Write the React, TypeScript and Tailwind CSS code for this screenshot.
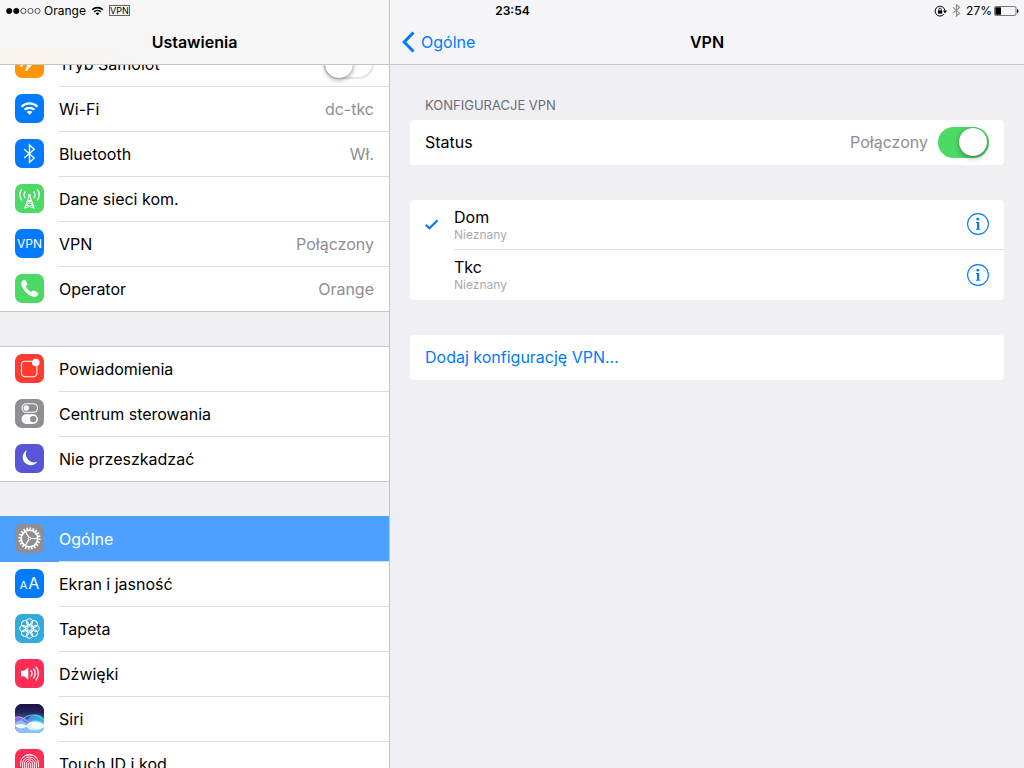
import React, { useState } from 'react';

interface SettingsItem {
  label: string;
  value?: string;
  icon: React.ReactNode;
}

interface VpnConfig {
  name: string;
  detail: string;
}

// Rounded tile behind every settings glyph
function Tile({ className, children }: { className: string; children: React.ReactNode }) {
  return (
    <svg
      viewBox="0 0 29 29"
      className={`mb-0.5 size-[29px] shrink-0 rounded-[7px] text-white ${className}`}
      fill="none"
      stroke="currentColor"
      aria-hidden="true"
    >
      {children}
    </svg>
  );
}

function TileText({ className, children }: { className: string; children: React.ReactNode }) {
  return (
    <span
      aria-hidden="true"
      className={`mb-0.5 flex size-[29px] shrink-0 items-baseline justify-center rounded-[7px] bg-[#007aff] leading-[29px] text-white ${className}`}
    >
      {children}
    </span>
  );
}

const airplaneIcon = (
  <Tile className="bg-[#ff9500]">
    <path
      d="M24.500 14c0 .9-1.500 1.500-3 1.500h-4L11.800 22h-1.900l2.600-6.500H8.800L6.700 18H5.200l1.200-4-1.200-4h1.500l2.100 2.500h3.700L9.900 6h1.900l5.700 6.500h4c1.500 0 3 .6 3 1.500z"
      fill="currentColor"
      stroke="none"
    />
  </Tile>
);

const wifiIcon = (
  <Tile className="bg-[#007aff]">
    <path d="M6.500 12.700a11.400 11.400 0 0 1 16 0" strokeWidth="2.200" />
    <path d="M9.500 15.800a7.200 7.200 0 0 1 10 0" strokeWidth="2.200" />
    <path d="M11.700 18a4 4 0 0 1 5.600 0l-2.800 2.900z" fill="currentColor" stroke="none" />
  </Tile>
);

const bluetoothIcon = (
  <Tile className="bg-[#007aff]">
    <path d="M9.200 10.200l10 8.900-4.700 4.300V5.900l4.700 4.300-10 8.900" strokeWidth="1.400" />
  </Tile>
);

const cellularIcon = (
  <Tile className="bg-[#4cd964]">
    <path d="M14.500 11l-4.800 13.500M14.500 11l4.800 13.500M12.900 16.500h3.200M12.600 16.500l5.200 4.500-7.600 3M16.400 16.500l-5.200 4.500 7.600 3" strokeWidth="1.100" />
    <circle cx="14.500" cy="11" r="1.300" fill="currentColor" stroke="none" />
    <path d="M10.400 7.500a4.600 4.600 0 0 0 0 6.500M18.600 7.500a4.600 4.600 0 0 1 0 6.500M6.900 5.200a8.200 8.200 0 0 0 0 11M22.100 5.200a8.200 8.200 0 0 1 0 11" strokeWidth="1.400" />
  </Tile>
);

const phoneIcon = (
  <Tile className="bg-[#4cd964]">
    <path
      d="M8.200 6.200c.9-.7 1.900-.6 2.500.3l1.500 2.500c.5.900.3 1.600-.4 2.200-.9.700-1 1.200-.5 2.100.9 1.700 2.200 3.100 3.900 4.100.9.500 1.400.5 2.100-.3.700-.8 1.400-.9 2.200-.4l3 1.900c.9.600 1 1.500.4 2.400-1.200 1.800-3.200 2.400-5.400 1.500C12.300 20.700 8.300 16.500 6.500 11.500c-.7-2-.2-4 1.700-5.300z"
      fill="currentColor"
      stroke="none"
    />
  </Tile>
);

const notificationsIcon = (
  <Tile className="bg-[#ff3b30]">
    <path d="M17.500 7.300H10A3.500 3.500 0 0 0 6.500 10.800v8.400A3.500 3.500 0 0 0 10 22.700h8.400a3.500 3.500 0 0 0 3.500-3.500v-7" strokeWidth="1.100" />
    <circle cx="20.800" cy="8.500" r="3.800" fill="currentColor" stroke="none" />
  </Tile>
);

const controlCenterIcon = (
  <Tile className="bg-[#8e8e93]">
    <rect x="7" y="4.700" width="15.500" height="8.600" rx="4.300" strokeWidth="1.100" />
    <circle cx="11.300" cy="9" r="2.700" fill="currentColor" stroke="none" />
    <rect x="6.500" y="15.300" width="16.500" height="9.600" rx="4.800" fill="currentColor" stroke="none" />
    <circle cx="18.200" cy="20.100" r="3.200" fill="#8e8e93" stroke="none" />
  </Tile>
);

const moonIcon = (
  <Tile className="bg-[#5856d6]">
    <path
      d="M11.800 6.300a8 8 0 1 0 10.700 11.200 8.200 8.200 0 0 1-10.700-11.200z"
      fill="currentColor"
      stroke="none"
    />
  </Tile>
);

const gearIcon = (
  <Tile className="bg-[#8e8e93]">
    <circle cx="14.500" cy="14.500" r="10" strokeWidth="2.200" pathLength="40" strokeDasharray="1 1" />
    <circle cx="14.500" cy="14.500" r="8.300" strokeWidth="1.700" />
    <circle cx="14.500" cy="14.500" r="1.300" strokeWidth="1" />
    <path d="M16 14.500h6.500M13.700 13.200l-3.500-6M13.700 15.800l-3.500 6" strokeWidth="1.200" />
  </Tile>
);

const wallpaperIcon = (
  <Tile className="bg-[#34aadc]">
    {[0, 45, 90, 135, 180, 225, 270, 315].map((angle) => (
      <circle
        key={angle}
        cx="14.500"
        cy="7.900"
        r="3.200"
        strokeWidth="1"
        transform={`rotate(${angle} 14.500 14.500)`}
      />
    ))}
    {[22, 67, 112, 157, 202, 247, 292, 337].map((angle) => (
      <circle
        key={angle}
        cx="14.500"
        cy="11.200"
        r="1.400"
        strokeWidth="0.800"
        transform={`rotate(${angle} 14.500 14.500)`}
      />
    ))}
  </Tile>
);

const soundsIcon = (
  <Tile className="bg-[#ff2d55]">
    <path d="M6 11.800h3l4.300-3.300v12l-4.300-3.300H6z" fill="currentColor" stroke="none" />
    <path d="M15.700 11.500a4.500 4.500 0 0 1 0 6M18.300 9.500a7.500 7.500 0 0 1 0 10M20.800 7.700a10.500 10.500 0 0 1 0 13.600" strokeWidth="1.300" />
  </Tile>
);

const siriIcon = (
  <Tile className="bg-[#1c1640]">
    <defs>
      <linearGradient id="siriSky" x1="0" y1="0" x2="0" y2="1">
        <stop offset="0" stopColor="#1d1345" />
        <stop offset="0.300" stopColor="#25265c" />
        <stop offset="0.550" stopColor="#3c6aa8" />
        <stop offset="1" stopColor="#a8dcff" />
      </linearGradient>
      <linearGradient id="siriWave" x1="0" y1="0" x2="1" y2="0">
        <stop offset="0" stopColor="#c85fe6" />
        <stop offset="0.450" stopColor="#5a8cf0" />
        <stop offset="1" stopColor="#27cfe0" />
      </linearGradient>
    </defs>
    <rect width="29" height="29" fill="url(#siriSky)" stroke="none" />
    <path d="M0 13.500c5-2 9 0 12 2.500C17 9 25 9 29 15v14H0z" fill="url(#siriWave)" fillOpacity="0.800" stroke="none" />
    <path d="M0 19c4-4 8-3 12 1 5-5 12-5 17 0v9H0z" fill="#8fd0ff" fillOpacity="0.750" stroke="none" />
    <path d="M0 13.500c6-2 10 2 14 5 5 3.500 10 3 15 0" stroke="#e09cf8" strokeWidth="0.900" />
    <path d="M3 20C10 10 21 8 29 16" stroke="#4be8ea" strokeWidth="0.900" />
    <path d="M0 21.500c4-2 8-1.800 11 .200 4-5 12-5.500 18-1v2.500c-6 4-14 4-18-.500-4 2.500-8 2-11-1.200z" fill="#f4fcff" stroke="none" />
    <path d="M2 26.500c7 1 11-4 15-7M12 21c4 3 8 6 14 5.500" stroke="#9cc8ff" strokeWidth="0.600" />
  </Tile>
);

const touchIdIcon = (
  <Tile className="bg-[#ff2d55]">
    <g strokeWidth="0.900" strokeLinecap="round">
      <path d="M7.500 8.500a10 10 0 0 1 14 0" />
      <path d="M5.500 17v-2.500a9 9 0 0 1 18 0V18" />
      <path d="M7.500 20v-5a7 7 0 0 1 14 0v6" />
      <path d="M9.400 22.500V15a5.100 5.100 0 0 1 10.200 0v8" />
      <path d="M11.300 24v-9a3.200 3.200 0 0 1 6.400 0v9" />
      <path d="M13.300 24v-9a1.200 1.200 0 0 1 2.400 0v9" />
    </g>
  </Tile>
);

const sections: SettingsItem[][] = [
  [
    { label: 'Wi-Fi', value: 'dc-tkc', icon: wifiIcon },
    { label: 'Bluetooth', value: 'Wł.', icon: bluetoothIcon },
    { label: 'Dane sieci kom.', icon: cellularIcon },
    { label: 'VPN', value: 'Połączony', icon: <TileText className="text-xs leading-[29px]">VPN</TileText> },
    { label: 'Operator', value: 'Orange', icon: phoneIcon },
  ],
  [
    { label: 'Powiadomienia', icon: notificationsIcon },
    { label: 'Centrum sterowania', icon: controlCenterIcon },
    { label: 'Nie przeszkadzać', icon: moonIcon },
  ],
  [
    { label: 'Ogólne', icon: gearIcon },
    {
      label: 'Ekran i jasność',
      icon: (
        <TileText className="gap-px text-base leading-[29px]">
          <span className="text-[11px]">A</span>A
        </TileText>
      ),
    },
    { label: 'Tapeta', icon: wallpaperIcon },
    { label: 'Dźwięki', icon: soundsIcon },
    { label: 'Siri', icon: siriIcon },
    { label: 'Touch ID i kod', icon: touchIdIcon },
  ],
];

const configs: VpnConfig[] = [
  { name: 'Dom', detail: 'Nieznany' },
  { name: 'Tkc', detail: 'Nieznany' },
];

function Switch({ id, checked, onChange }: { id: string; checked: boolean; onChange: (value: boolean) => void }) {
  return (
    <input
      id={id}
      type="checkbox"
      role="switch"
      checked={checked}
      onChange={(e) => onChange(e.target.checked)}
      className="flex h-[31px] w-[51px] shrink-0 cursor-pointer appearance-none items-center rounded-full border-2 border-[#e5e5e5] bg-white before:size-7 before:rounded-full before:bg-white before:shadow-[0_2px_5px_rgba(0,0,0,0.35),0_0_1px_rgba(0,0,0,0.4)] checked:justify-end checked:border-[#4cd964] checked:bg-[#4cd964]"
    />
  );
}

function StatusBar() {
  return (
    <div className="absolute inset-x-0 top-0 z-20 grid h-[21px] grid-cols-[1fr_auto_1fr] items-center pr-[5px] pl-1.5 text-xs text-black">
      <div className="flex items-center">
        <svg viewBox="0 0 35 8" className="mr-[3px] h-2 w-[35px]" stroke="#111" strokeWidth="0.700" aria-hidden="true">
          <circle cx="3.200" cy="4" r="2.700" fill="#000" />
          <circle cx="10.300" cy="4" r="2.700" fill="#000" />
          <circle cx="17.400" cy="4" r="2.600" fill="none" />
          <circle cx="24.500" cy="4" r="2.600" fill="none" />
          <circle cx="31.500" cy="4" r="2.600" fill="none" />
        </svg>
        <span>Orange</span>
        <svg viewBox="5 7 19 15" className="ml-[5px] h-[10px] w-[13px]" fill="none" stroke="#000" aria-hidden="true">
          <path d="M6.500 12.700a11.400 11.400 0 0 1 16 0M9.500 15.800a7.200 7.200 0 0 1 10 0" strokeWidth="2.300" />
          <path d="M11.700 18a4 4 0 0 1 5.600 0l-2.800 2.900z" fill="#000" stroke="none" />
        </svg>
        <span className="ml-[5px] flex h-[11px] w-[21px] items-center justify-center border border-[#666] text-[9px]">VPN</span>
      </div>
      <span className="font-semibold">23:54</span>
      <div className="flex items-center justify-end">
        <svg viewBox="0 0 13 12" className="mr-[5px] h-3 w-[13px]" fill="none" stroke="#000" aria-hidden="true">
          <path d="M9.900 9.200a4.900 4.900 0 1 1 1-3.700" />
          <path d="M9 5.500h4L11 8.500z" fill="#000" stroke="none" />
          <rect x="4" y="5.400" width="4.200" height="3.200" fill="#000" stroke="none" />
          <path d="M4.900 5.600V4.400a1.200 1.200 0 0 1 2.400 0v1.200" strokeWidth="0.800" />
        </svg>
        <svg viewBox="8 5 13 20" className="mr-[5px] h-[13px] w-[9px]" fill="none" stroke="#909090" aria-hidden="true">
          <path d="M9.200 10.200l10 8.900-4.700 4.300V5.900l4.700 4.300-10 8.900" strokeWidth="1.800" />
        </svg>
        <span>27%</span>
        <svg viewBox="0 0 25 10" className="ml-0.5 h-[10px] w-[25px]" fill="none" aria-hidden="true">
          <rect x="0.500" y="0.500" width="21.500" height="9" rx="1.500" stroke="#444" strokeWidth="0.700" />
          <rect x="1.300" y="1.300" width="5.700" height="7.400" rx="0.500" fill="#000" />
          <path d="M23 3c1 .2 1.500 1 1.500 2S24 6.800 23 7z" fill="#000" />
        </svg>
      </div>
    </div>
  );
}

function SettingsRow({ item, selected, last, onSelect }: {
  item: SettingsItem;
  selected: boolean;
  last: boolean;
  onSelect: () => void;
}) {
  return (
    <li className={last ? 'border-b border-[#c8c7cc]' : ''}>
      <button
        type="button"
        onClick={onSelect}
        className={`flex w-full items-center gap-[15px] pl-[15px] text-left ${selected ? 'bg-[#4ca1ff] text-white' : 'bg-white text-black'}`}
      >
        {item.icon}
        <span className={`flex flex-1 items-center justify-between pr-[15px] pb-px ${last ? 'h-11' : 'h-[45px] border-b border-[#dddde0]'}`}>
          <span>{item.label}</span>
          {item.value && <span className="text-[#8e8e93]">{item.value}</span>}
        </span>
      </button>
    </li>
  );
}

function Sidebar() {
  const [airplane, setAirplane] = useState(false);
  const [current, setCurrent] = useState('Ogólne');

  // the line above a section takes the highlight when its first row is selected
  const topLine = (items: SettingsItem[]) =>
    items[0].label === current ? 'border-t border-[#4ca1ff]' : 'border-t border-[#c8c7cc]';

  return (
    <aside className="flex w-[390px] shrink-0 flex-col border-r border-[#c3c3c7]">
      <header className="z-10 flex h-[65px] shrink-0 items-center justify-center border-b border-[#c4c4c6] bg-[#f6f6f7] bg-radial-[at_8%_100%] from-[#fbf3ea] to-[#f6f6f7] to-25% pt-5">
        <h1 className="font-semibold">Ustawienia</h1>
      </header>
      <div className="min-h-0 flex-1 overflow-hidden">
        {/* list is scrolled halfway through its first row */}
        <nav className="-mt-[23px] flex flex-col gap-[34px]">
          {sections.map((items, index) => (
            <ul key={index} className={index > 0 ? topLine(items) : ''}>
              {index === 0 && (
                <li className="flex items-center gap-[15px] bg-white pl-[15px]">
                  {airplaneIcon}
                  <span className="flex h-[45px] flex-1 items-center justify-between border-b border-[#dddde0] pr-[15px] pb-px">
                    <label htmlFor="airplane">Tryb Samolot</label>
                    <Switch id="airplane" checked={airplane} onChange={setAirplane} />
                  </span>
                </li>
              )}
              {items.map((item, i) => (
                <SettingsRow
                  key={item.label}
                  item={item}
                  selected={item.label === current}
                  last={i === items.length - 1}
                  onSelect={() => setCurrent(item.label)}
                />
              ))}
            </ul>
          ))}
        </nav>
      </div>
    </aside>
  );
}

function VpnPanel() {
  const [connected, setConnected] = useState(true);
  const [active, setActive] = useState('Dom');

  return (
    <main className="flex min-w-0 flex-1 flex-col">
      <header className="grid h-[65px] shrink-0 grid-cols-[1fr_auto_1fr] items-center border-b border-[#c6c6ca] bg-[#f5f5f7] px-3 pt-5">
        <button type="button" className="flex items-center gap-1.5 justify-self-start text-[#007aff]">
          <svg viewBox="0 0 13 22" className="h-[22px] w-[13px]" fill="none" stroke="currentColor" strokeWidth="3" aria-hidden="true">
            <path d="M11.500 1.500L2.200 11l9.300 9.500" />
          </svg>
          Ogólne
        </button>
        <h2 className="font-semibold">VPN</h2>
      </header>

      <div className="px-5 pt-[30px]">
        <h3 className="mb-[5px] px-[15px] text-[13px] leading-5 text-[#6d6d72]">KONFIGURACJE VPN</h3>
        <div className="flex h-[45px] items-center rounded bg-white px-[15px] pb-px">
          <label htmlFor="status" className="flex-1">Status</label>
          <span className="mr-2.5 text-[#8e8e93]">Połączony</span>
          <Switch id="status" checked={connected} onChange={setConnected} />
        </div>

        <ul className="mt-[35px] rounded bg-white">
          {configs.map((config, index) => (
            <li key={config.name} className="flex h-[50px] items-center pl-[15px]">
              <span className="w-[29px] shrink-0 pb-0.5">
                {config.name === active && (
                  <svg viewBox="0 0 14 11" className="h-[11px] w-[14px]" fill="none" stroke="#007aff" strokeWidth="2.200" aria-hidden="true">
                    <path d="M.8 5.800l3.700 3.500 8-8" />
                  </svg>
                )}
              </span>
              <div className={`flex h-full flex-1 items-center justify-between pr-[15px] ${index < configs.length - 1 ? 'border-b border-[#dddde0]' : ''}`}>
                <button type="button" onClick={() => setActive(config.name)} className="flex-1 text-left">
                  <span className="block leading-5">{config.name}</span>
                  <span className="block text-xs leading-4 text-[#aaaaac]">{config.detail}</span>
                </button>
                <button type="button" aria-label={`Informacje: ${config.name}`} className="mb-px text-[#007aff]">
                  <svg viewBox="0 0 22 22" className="size-[22px]" fill="none" stroke="currentColor" aria-hidden="true">
                    <circle cx="11" cy="11" r="10.400" strokeWidth="1.100" />
                    <circle cx="10.800" cy="6.200" r="1.400" fill="currentColor" stroke="none" />
                    <path d="M9 9h3.200v6.800h1v.9H9v-.9h1V9.900H9z" fill="currentColor" stroke="none" />
                  </svg>
                </button>
              </div>
            </li>
          ))}
        </ul>

        <button type="button" className="mt-[35px] block h-[45px] w-full rounded bg-white px-[15px] pb-0.5 text-left text-[#007aff]">
          Dodaj konfigurację VPN...
        </button>
      </div>
    </main>
  );
}

export default function App() {
  return (
    <div className="relative flex h-screen overflow-hidden bg-[#efeff4] font-['Inter','Liberation_Sans',sans-serif] text-base text-black">
      <StatusBar />
      <Sidebar />
      <VpnPanel />
    </div>
  );
}
